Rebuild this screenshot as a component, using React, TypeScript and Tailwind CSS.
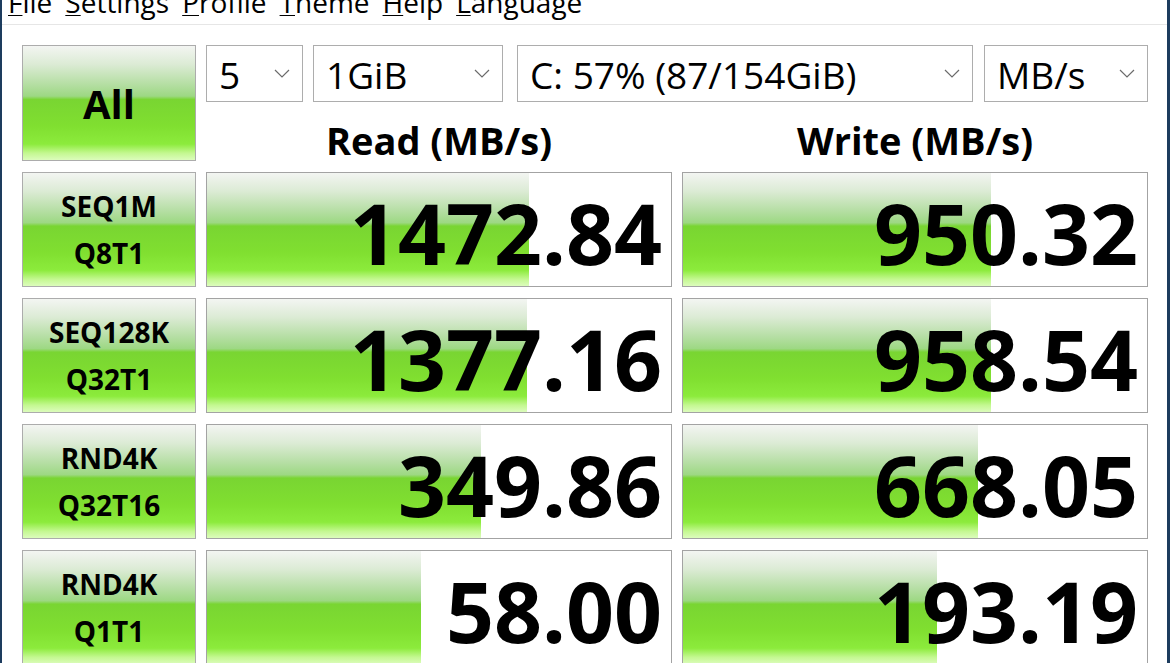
import React from "react";

const GRAD =
  "bg-[linear-gradient(to_bottom,#f3f5f2_0%,#dcebd5_16%,#b4dea2_34%,#9dd883_44%,#79d532_47%,#80df30_70%,#8ceb3c_86%,#c4f891_94%,#dcfcbc_100%)]";

const FONT = "font-['Open_Sans','Noto_Sans',sans-serif]";

function Chevron() {
  return (
    <svg width="16" height="9" viewBox="0 0 16 9" className="shrink-0">
      <polyline points="1,1 8,8 15,1" fill="none" stroke="#6b6b6b" strokeWidth="1.2" />
    </svg>
  );
}

function Select({ w, text }: { w: string; text: string }) {
  return (
    <div className={`${w} h-[57px] border border-[#adadad] bg-white flex items-center justify-between pl-[12px] pr-[12px]`}>
      <span className="text-[37px] leading-none text-black pt-[1px]">{text}</span>
      <Chevron />
    </div>
  );
}

const rows = [
  { l1: "SEQ1M", l2: "Q8T1", r: "1472.84", rw: 322, w: "950.32", ww: 308 },
  { l1: "SEQ128K", l2: "Q32T1", r: "1377.16", rw: 320, w: "958.54", ww: 308 },
  { l1: "RND4K", l2: "Q32T16", r: "349.86", rw: 274, w: "668.05", ww: 295 },
  { l1: "RND4K", l2: "Q1T1", r: "58.00", rw: 214, w: "193.19", ww: 254 },
];

function Result({ value, fill }: { value: string; fill: number }) {
  return (
    <div className="relative w-[466px] h-[115px] border border-[#a3a3a3] bg-white overflow-hidden">
      <div className={`absolute left-0 top-0 bottom-0 ${GRAD}`} style={{ width: fill }} />
      <div className="relative h-full flex items-center justify-end pr-[9px] pt-[6px]">
        <span className="text-[84px] font-bold leading-none text-black">{value}</span>
      </div>
    </div>
  );
}

export default function App() {
  const menu = ["File", "Settings", "Profile", "Theme", "Help", "Language"];
  return (
    <div className={`w-[1170px] h-[663px] overflow-hidden bg-white border-l-2 border-r-[3px] border-[#1d3c5e] flex flex-col ${FONT}`}>
      <div className="h-[25px] shrink-0 border-b border-[#e6e6e6] overflow-hidden bg-white">
        <div className="flex gap-[13px] pl-[6px] -mt-[12px] text-[28px] leading-none text-black">
          {menu.map((m) => (
            <span key={m}>
              <span className="underline underline-offset-[2px] decoration-1">{m[0]}</span>
              {m.slice(1)}
            </span>
          ))}
        </div>
      </div>

      <div className="pl-[20px] pt-[20px] flex flex-col">
        <div className="flex gap-[10px] h-[116px]">
          <div className={`w-[174px] h-[116px] border border-[#acacac] ${GRAD} flex items-center justify-center`}>
            <span className="text-[40px] font-bold text-black leading-none pt-[2px]">All</span>
          </div>
          <div className="flex flex-col w-[942px]">
            <div className="flex h-[57px]">
              <Select w="w-[97px]" text="5" />
              <div className="w-[10px]" />
              <Select w="w-[190px]" text="1GiB" />
              <div className="w-[14px]" />
              <Select w="w-[456px]" text="C: 57% (87/154GiB)" />
              <div className="w-[11px]" />
              <Select w="w-[164px]" text="MB/s" />
            </div>
            <div className="flex gap-[10px] h-[59px] items-end pb-[2px]">
              <div className="w-[466px] text-center text-[38px] font-bold leading-none text-black">Read (MB/s)</div>
              <div className="w-[466px] text-center text-[38px] font-bold leading-none text-black">Write (MB/s)</div>
            </div>
          </div>
        </div>

        <div className="flex flex-col gap-[11px] mt-[11px]">
          {rows.map((r, i) => (
            <div key={i} className="flex gap-[10px]">
              <div className={`w-[174px] h-[115px] border border-[#acacac] ${GRAD} flex flex-col items-center justify-center`}>
                <span className="text-[28px] font-bold leading-[47px] text-black">{r.l1}</span>
                <span className="text-[28px] font-bold leading-[47px] text-black">{r.l2}</span>
              </div>
              <Result value={r.r} fill={r.rw} />
              <Result value={r.w} fill={r.ww} />
            </div>
          ))}
        </div>
      </div>
    </div>
  );
}
